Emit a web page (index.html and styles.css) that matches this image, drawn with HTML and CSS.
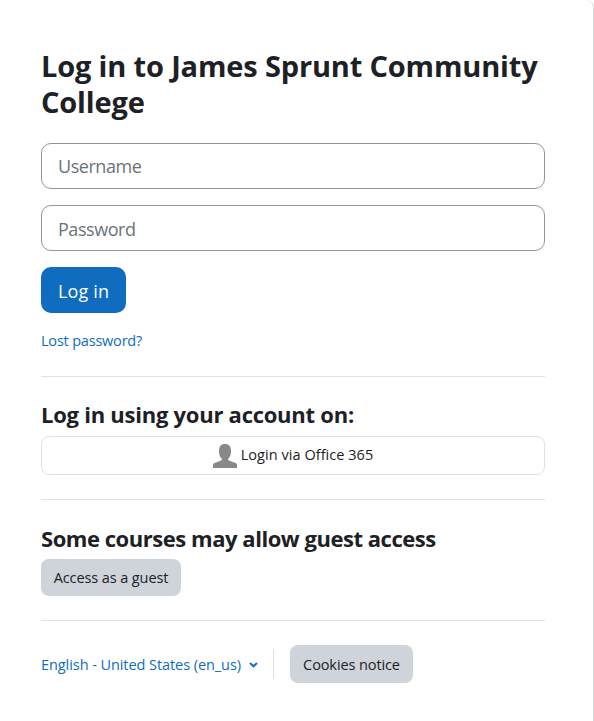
FILE: index.html
```html
<!DOCTYPE html>
<html lang="en">

<head>
    <meta charset="utf-8">
    <title>Log in to the site</title>
    <link rel="stylesheet" href="styles.css">
</head>

<body>
    <main class="login-container">
        <h1 class="login-heading">Log in to James Sprunt Community College</h1>

        <form class="login-form" action="#" method="post">
            <input class="form-control" type="text" name="username" placeholder="Username" aria-label="Username">
            <input class="form-control password" type="password" name="password" placeholder="Password" aria-label="Password">
            <button class="btn btn-primary" type="submit">Log in</button>
            <a class="lost-password" href="#">Lost password?</a>
        </form>

        <section class="login-section">
            <h2 class="accounts-heading">Log in using your account on:</h2>
            <a class="btn login-provider" href="#">
                <svg width="24" height="24" viewBox="0 0 24 24" aria-hidden="true">
                    <path fill="#888" d="M12 0C8 0 6 2.600 6 7c0 3.500.8 6 2.800 7.700V16.200L1.500 19C.4 19.500 0 20 0 21v3h24v-3c0-1-.4-1.500-1.500-2L15.200 16.200v-1.500C17.200 13 18 10.500 18 7c0-4.400-2-7-6-7z"/>
                </svg>
                <span>Login via Office 365</span>
            </a>
        </section>

        <section class="login-section">
            <h2 class="guest-heading">Some courses may allow guest access</h2>
            <button class="btn btn-secondary guest" type="button">Access as a guest</button>
        </section>

        <footer class="login-footer">
            <a class="language" href="#">
                <span>English - United States (en_us)</span>
                <svg width="9" height="6" viewBox="0 0 9 6" aria-hidden="true">
                    <path d="M1 1l3.500 3.300L8 1" fill="none" stroke="#0f6cbf" stroke-width="2"/>
                </svg>
            </a>
            <div class="divider"></div>
            <button class="btn btn-secondary cookies" type="button">Cookies notice</button>
        </footer>
    </main>
</body>

</html>
```

FILE: styles.css
```css
* {
    box-sizing: border-box;
}

body {
    margin: 0;
    background: #fff;
    color: #1d2125;
    font-family: "Open Sans", "Noto Sans", sans-serif;
    font-size: 14.5px;
    line-height: 22px;
}

a {
    color: #0f6cbf;
    text-decoration: none;
}

.login-container {
    height: 721px;
    padding: 48px 48px 0 41px;
    border-right: 1px solid #d5d7da;
    border-top-right-radius: 8px;
}

h1,
h2 {
    margin: 0;
    font-weight: 700;
    white-space: nowrap;
}

.login-heading {
    height: 72px;
    margin-bottom: 23px;
    font-size: 29px;
    line-height: 36px;
    letter-spacing: -0.16px;
    white-space: normal;
}

.login-form {
    display: flex;
    flex-direction: column;
    align-items: flex-start;
    gap: 16px;
    height: 233px;
}

.form-control {
    width: 100%;
    height: 46px;
    padding: 8px 16px;
    border: 1px solid #8f959e;
    border-radius: 10px;
    font-family: inherit;
    font-size: 18px;
    letter-spacing: -0.46px;
}

.password {
    padding-top: 10px;
}

.form-control::placeholder {
    color: #6a737b;
    opacity: 1;
}

.btn {
    display: flex;
    align-items: center;
    justify-content: center;
    padding: 0;
    border: 0;
    border-radius: 8px;
    font-family: inherit;
    font-size: 14.5px;
    letter-spacing: -0.1px;
    white-space: nowrap;
}

.btn-primary {
    width: 85px;
    height: 46px;
    padding-top: 2px;
    border-radius: 10px;
    background: #0f6cbf;
    color: #fff;
    font-size: 18px;
    letter-spacing: 0.15px;
}

.lost-password {
    padding-top: 1px;
    letter-spacing: -0.2px;
}

.login-section {
    padding-top: 24px;
    border-top: 1px solid #dee2e6;
}

.login-section h2 {
    height: 35px;
    font-size: 22px;
    line-height: 29px;
}

.login-section .accounts-heading {
    line-height: 27px;
    letter-spacing: -0.25px;
}

.guest-heading {
    letter-spacing: -0.46px;
}

.login-provider {
    gap: 4px;
    height: 39px;
    margin-bottom: 24px;
    border: 1px solid #dee2e6;
    color: #1d2125;
    letter-spacing: 0.05px;
}

.login-provider span {
    padding-bottom: 2px;
}

.btn-secondary {
    background: #ced4da;
    color: #1d2125;
}

.guest {
    width: 140px;
    height: 37px;
    margin-bottom: 24px;
}

.login-footer {
    display: flex;
    align-items: center;
    padding-top: 24px;
    border-top: 1px solid #dee2e6;
}

.language {
    display: flex;
    align-items: center;
    gap: 8px;
    width: 232px;
    padding-top: 2px;
    letter-spacing: -0.07px;
    white-space: nowrap;
}

.divider {
    width: 1px;
    height: 30px;
    margin-right: 16px;
    background: #dee2e6;
}

.cookies {
    width: 123px;
    height: 38px;
}
```
